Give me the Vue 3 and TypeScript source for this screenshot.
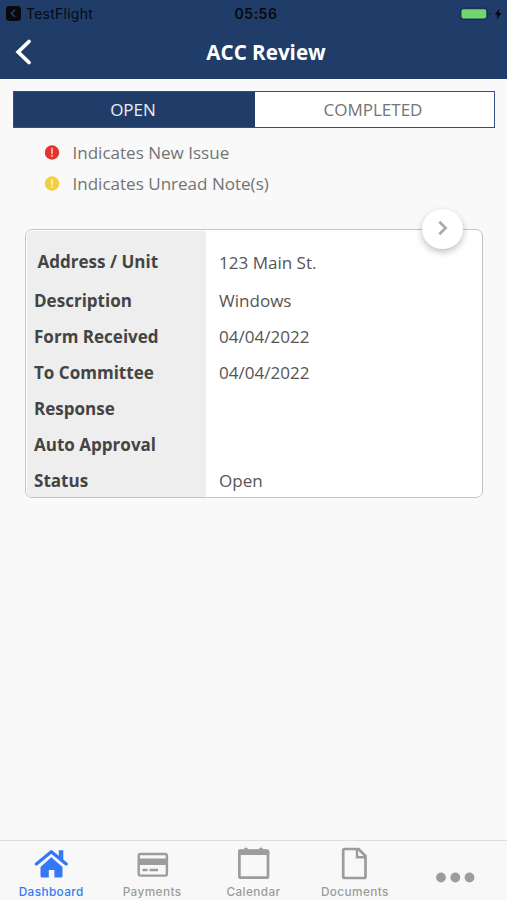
<script setup lang="ts">
interface Row {
  label: string
  value: string
}

const rows: Row[] = [
  { label: 'Address / Unit', value: '123 Main St.' },
  { label: 'Description', value: 'Windows' },
  { label: 'Form Received', value: '04/04/2022' },
  { label: 'To Committee', value: '04/04/2022' },
  { label: 'Response', value: '' },
  { label: 'Auto Approval', value: '' },
  { label: 'Status', value: 'Open' },
]

const legend = [
  { kind: 'issue', text: 'Indicates New Issue' },
  { kind: 'unread', text: 'Indicates Unread Note(s)' },
]
</script>

<template>
  <div class="screen">
    <header class="header">
      <div class="status">
        <div class="back-app">
          <svg width="15" height="15" viewBox="0 0 15 15">
            <rect width="15" height="15" rx="3.2" fill="#07090d" />
            <path d="M9 3.8 5.3 7.3 9 10.8" fill="none" stroke="#203d69" stroke-width="1.6" />
          </svg>
          <span class="back-app-name">TestFlight</span>
        </div>
        <span class="time">05:56</span>
        <div class="power">
          <svg width="44" height="16" viewBox="0 0 44 16">
            <rect x="1.3" y="2" width="27" height="11.5" rx="3" fill="none" stroke="#162d50" stroke-width="1" />
            <rect x="2.5" y="3.2" width="24.7" height="9.2" rx="1.8" fill="#73d66d" />
            <path d="M30.2 6v3.7q1.3-.5 1.3-1.85T30.2 6z" fill="#162d50" />
            <path d="M40.6 2.5 35.6 8.8h3l-.9 4.7 5-6.5h-3.1z" fill="#05080e" />
          </svg>
        </div>
      </div>
      <div class="nav">
        <svg class="back" width="18" height="28" viewBox="0 0 18 28">
          <path d="M14 3.500 3.200 14 14 24.500" fill="none" stroke="#fff" stroke-width="3.8" stroke-linecap="round" stroke-linejoin="miter" />
        </svg>
        <h1 class="title">ACC Review</h1>
      </div>
    </header>

    <main class="content">
      <div class="tabs">
        <button class="tab active">OPEN</button>
        <button class="tab">COMPLETED</button>
      </div>

      <ul class="legend">
        <li v-for="item in legend" :key="item.kind" class="legend-item">
          <svg class="legend-icon" :class="item.kind" width="15" height="15" viewBox="0 0 15 15">
            <circle cx="7" cy="7.5" r="7.2" fill="currentColor" />
            <path d="M7 3.6v4.7" stroke="#fff" stroke-opacity=".7" stroke-width="1.7" stroke-linecap="round" />
            <circle cx="7" cy="11" r="1" fill="#fff" fill-opacity=".7" />
          </svg>
          <span class="legend-text">{{ item.text }}</span>
        </li>
      </ul>

      <section class="card">
        <dl class="rows">
          <div v-for="(row, i) in rows" :key="row.label" class="row" :class="{ first: i === 0 }">
            <dt class="label">{{ row.label }}</dt>
            <dd class="value">{{ row.value }}</dd>
          </div>
        </dl>
        <button class="open-card" aria-label="Open details">
          <svg width="14" height="18" viewBox="0 0 14 18">
            <path d="M3.3 2.7 9.6 9l-6.3 6.3" fill="none" stroke="#aaa" stroke-width="2.7" />
          </svg>
        </button>
      </section>
    </main>

    <nav class="tabbar">
      <a class="bar-item current">
        <svg class="bar-icon" width="34" height="34" viewBox="0 0 34 34">
          <path d="M2.4 18 17.300 5.800 32.200 18" fill="none" stroke="currentColor" stroke-width="3.3" stroke-linecap="round" stroke-linejoin="round" />
          <path d="M24.8 4.300h4.500v11l-4.500-3.700z" fill="currentColor" />
          <path d="M17.300 11.300 28.500 21v9.100q0 1.300-1.300 1.300h-6.800v-7.500h-5.600v7.500H7.800q-1.300 0-1.300-1.300V21z" fill="currentColor" />
        </svg>
        <span class="bar-label">Dashboard</span>
      </a>
      <a class="bar-item">
        <svg class="bar-icon" width="34" height="34" viewBox="0 0 34 34">
          <rect x="3.7" y="8" width="28.200" height="21.600" rx="1.800" fill="none" stroke="currentColor" stroke-width="2.400" />
          <path d="M3.500 12.500h29v6.500h-29z" fill="currentColor" />
          <path d="M7.500 24h5M14.500 24h8.500" stroke="currentColor" stroke-width="2.700" />
        </svg>
        <span class="bar-label">Payments</span>
      </a>
      <a class="bar-item">
        <svg class="bar-icon" width="34" height="34" viewBox="0 0 34 34">
          <rect x="3.400" y="5" width="28.600" height="26.700" rx="1.500" fill="none" stroke="currentColor" stroke-width="2.700" />
          <path d="M3.500 3.200h27.500q2.300 0 2.300 2V9H2.100V5.200q0-2 1.400-2z" fill="currentColor" />
          <path d="M8 3.500q0-2 2-2t2 2M23 3.500q0-2 2-2t2 2" fill="currentColor" />
        </svg>
        <span class="bar-label">Calendar</span>
      </a>
      <a class="bar-item">
        <svg class="bar-icon" width="34" height="34" viewBox="0 0 34 34">
          <path d="M6.700 3h13.800l7 7v20.500q0 1.500-1.500 1.500H6.700q-1.500 0-1.500-1.500v-26Q5.200 3 6.700 3z" fill="none" stroke="currentColor" stroke-width="2.700" stroke-linejoin="round" />
          <path d="M19 3v8.300h8.500" fill="none" stroke="currentColor" stroke-width="2.500" />
        </svg>
        <span class="bar-label">Documents</span>
      </a>
      <a class="bar-item more">
        <svg width="40" height="12" viewBox="0 0 40 12">
          <g fill="currentColor">
            <circle cx="5" cy="5.500" r="4.900" />
            <circle cx="19.300" cy="5.500" r="4.900" />
            <circle cx="33.500" cy="5.500" r="4.900" />
          </g>
        </svg>
      </a>
    </nav>
  </div>
</template>

<style>
body {
  background: #f9f9f9;
}
</style>

<style scoped>
.screen {
  display: flex;
  flex-direction: column;
  height: 900px;
  overflow: hidden;
  background: #f9f9f9;
  font-family: 'Open Sans', 'Noto Sans', sans-serif;
}
.header {
  box-sizing: border-box;
  height: 79px;
  background: #203d69;
}
.status {
  display: grid;
  grid-template-columns: 1fr auto 1fr;
  align-items: center;
  height: 27px;
  padding: 0 4px 0 6px;
  font-family: Inter, sans-serif;
  color: #07090d;
}
.back-app {
  display: flex;
  align-items: center;
  gap: 5px;
}
.back-app-name {
  font-size: 14px;
  letter-spacing: 0.25px;
}
.time {
  padding-left: 3px;
  font-size: 14px;
  font-weight: 600;
  letter-spacing: 0.5px;
}
.power {
  display: flex;
  justify-content: flex-end;
}
.nav {
  display: grid;
  grid-template-columns: 50px 1fr 25px;
  align-items: center;
  height: 50px;
}
.back {
  margin-left: 15px;
}
.title {
  margin: 0;
  font-size: 20.6px;
  font-weight: 700;
  line-height: 28px;
  text-align: center;
  color: #fff;
}
.content {
  flex: 1;
  padding: 12px 12px 0 13px;
}
.tabs {
  display: grid;
  grid-template-columns: 241px 1fr;
  box-sizing: border-box;
  height: 37px;
  border: 1px solid #31507f;
  background: #fff;
}
.tab {
  padding: 0 3px 1px 0;
  border: 0;
  background: #fff;
  font: 17px 'Open Sans', sans-serif;
  color: #747474;
}
.tab.active {
  background: #203d69;
  color: #e9edf4;
}
.legend {
  display: flex;
  flex-direction: column;
  margin: 9px 0 0;
  padding: 0 0 0 32px;
  list-style: none;
}
.legend-item {
  display: flex;
  align-items: center;
  gap: 12.5px;
  height: 31px;
}
.legend-icon {
  flex: none;
}
.issue {
  color: #e3342e;
}
.unread {
  color: #f2cf3e;
}
.legend-text {
  font-size: 17.05px;
  line-height: 24px;
  color: #737373;
}
.card {
  position: relative;
  box-sizing: border-box;
  width: 458px;
  height: 269px;
  margin: 30px 0 0 12px;
  padding: 1px;
  border: 1px solid #c5c5c5;
  border-radius: 7px;
  background: #fff;
}
.rows {
  margin: 0;
  border-radius: 5px;
  overflow: hidden;
}
.row {
  display: grid;
  grid-template-columns: 179px 1fr;
  height: 36px;
}
.row.first {
  height: 50px;
}
.label,
.value {
  display: flex;
  align-items: center;
  padding-top: 4px;
  font-size: 17.05px;
  line-height: 24px;
}
.label {
  padding-left: 7px;
  background: #eee;
  font-weight: 700;
  color: #444;
}
.value {
  margin: 0;
  padding-left: 13px;
  color: #555;
}
.first .label {
  padding-top: 12px;
  padding-left: 10.5px;
}
.first .value {
  padding-top: 14px;
}
.open-card {
  position: absolute;
  top: -21px;
  right: 19px;
  display: flex;
  align-items: center;
  justify-content: center;
  width: 41px;
  height: 40px;
  padding: 0 0 2px;
  border: 0;
  border-radius: 50%;
  background: #fff;
  box-shadow: 0 3px 7px rgba(0, 0, 0, 0.25);
}
.tabbar {
  display: grid;
  grid-template-columns: repeat(5, 1fr);
  box-sizing: border-box;
  height: 60px;
  border-top: 1px solid #dedede;
  background: #f8f8f8;
}
.bar-item {
  display: flex;
  flex-direction: column;
  align-items: center;
  padding-top: 5px;
  color: #9c9c9c;
}
.bar-item.current {
  color: #3478f6;
}
.bar-label {
  margin-top: 3px;
  font: 500 11.8px/18px Inter, sans-serif;
  letter-spacing: 0.4px;
}
.bar-item.current .bar-label {
  padding-left: 1px;
}
.more {
  padding-top: 31px;
}
</style>
